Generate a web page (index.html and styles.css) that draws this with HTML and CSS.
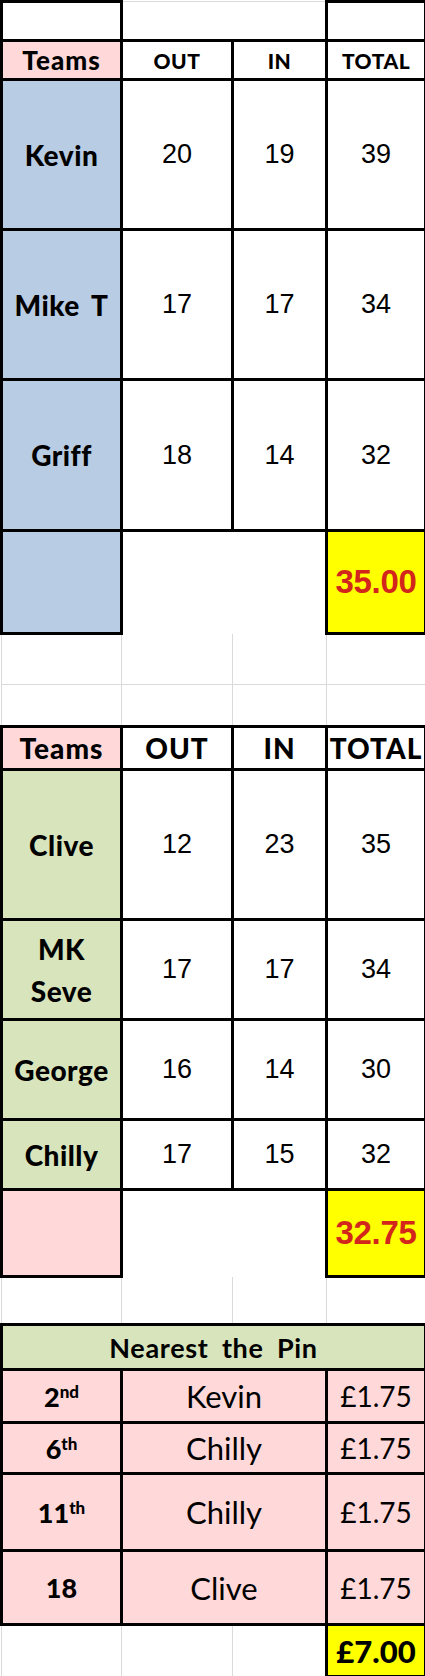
FILE: index.html
```html
<!DOCTYPE html>
<html lang="en">
<head>
<meta charset="utf-8">
<title>Team scores</title>
<link rel="stylesheet" href="styles.css">
</head>
<body>
<table class="sheet">
  <colgroup>
    <col class="c1"><col class="c2"><col class="c3"><col class="c4">
  </colgroup>
  <tbody>
    <tr class="r-top">
      <td class="b"></td><td class="g" colspan="2"></td><td class="b"></td>
    </tr>
    <tr class="r-head1">
      <td class="b pink hd">Teams</td>
      <td class="b hd-sm">OUT</td>
      <td class="b hd-sm">IN</td>
      <td class="b hd-sm">TOTAL</td>
    </tr>
    <tr class="r-150">
      <td class="b blue name">Kevin</td><td class="b num">20</td><td class="b num">19</td><td class="b num">39</td>
    </tr>
    <tr class="r-150">
      <td class="b blue name">Mike T</td><td class="b num">17</td><td class="b num">17</td><td class="b num">34</td>
    </tr>
    <tr class="r-151">
      <td class="b blue name">Griff</td><td class="b num">18</td><td class="b num">14</td><td class="b num">32</td>
    </tr>
    <tr class="r-total1">
      <td class="b blue"></td><td class="open" colspan="2"></td><td class="b yellow avg">35.00</td>
    </tr>
    <tr class="r-gap51">
      <td class="g"></td><td class="g"></td><td class="g"></td><td class="g"></td>
    </tr>
    <tr class="r-gap42">
      <td class="g"></td><td class="g"></td><td class="g"></td><td class="g"></td>
    </tr>
    <tr class="r-head2">
      <td class="b pink hd">Teams</td>
      <td class="b hd">OUT</td>
      <td class="b hd">IN</td>
      <td class="b hd">TOTAL</td>
    </tr>
    <tr class="r-150">
      <td class="b green name">Clive</td><td class="b num">12</td><td class="b num">23</td><td class="b num">35</td>
    </tr>
    <tr class="r-100">
      <td class="b green name two">MK<br>Seve</td><td class="b num">17</td><td class="b num">17</td><td class="b num">34</td>
    </tr>
    <tr class="r-100">
      <td class="b green name">George</td><td class="b num">16</td><td class="b num">14</td><td class="b num">30</td>
    </tr>
    <tr class="r-70">
      <td class="b green name">Chilly</td><td class="b num">17</td><td class="b num">15</td><td class="b num">32</td>
    </tr>
    <tr class="r-total2">
      <td class="b pink"></td><td class="open" colspan="2"></td><td class="b yellow avg">32.75</td>
    </tr>
    <tr class="r-gap48">
      <td class="g"></td><td class="g"></td><td class="g"></td><td class="g"></td>
    </tr>
    <tr class="r-ntp">
      <td class="b green ntp" colspan="4">Nearest the Pin</td>
    </tr>
    <tr class="r-53">
      <td class="b pink hole">2<sup>nd</sup></td><td class="b pink who" colspan="2">Kevin</td><td class="b pink prize">£1.75</td>
    </tr>
    <tr class="r-51">
      <td class="b pink hole">6<sup>th</sup></td><td class="b pink who" colspan="2">Chilly</td><td class="b pink prize">£1.75</td>
    </tr>
    <tr class="r-77">
      <td class="b pink hole">11<sup>th</sup></td><td class="b pink who" colspan="2">Chilly</td><td class="b pink prize">£1.75</td>
    </tr>
    <tr class="r-74">
      <td class="b pink hole">18</td><td class="b pink who" colspan="2">Clive</td><td class="b pink prize">£1.75</td>
    </tr>
    <tr class="r-last">
      <td class="g"></td><td class="g"></td><td class="g"></td><td class="b yellow pot">£7.00</td>
    </tr>
  </tbody>
</table>
</body>
</html>
```

FILE: styles.css
```css
html, body {
  margin: 0;
  padding: 0;
  background: #ffffff;
}

.sheet {
  border-collapse: collapse;
  table-layout: fixed;
  width: 424px;
  color: #000;
  font-family: Lato, "DejaVu Sans", sans-serif;
}

.c1 { width: 120px; }
.c2 { width: 111px; }
.c3 { width: 94px; }
.c4 { width: 99px; }

.sheet td {
  padding: 0;
  text-align: center;
  vertical-align: middle;
  white-space: nowrap;
  overflow: visible;
}

.b { border: 3px solid #000; }
.g { border: 1px solid #dadada; }
.open {
  border: 1px solid #dadada;
  border-bottom-style: hidden;
}

.pink { background: #ffd9d9; }
.blue { background: #b8cce4; }
.green { background: #d8e4bc; }
.yellow { background: #ffff00; }

.r-top { height: 39px; }
.r-head1 { height: 39px; }
.r-150 { height: 150px; }
.r-151 { height: 151px; }
.r-total1 { height: 103px; }
.r-gap51 { height: 51px; }
.r-gap42 { height: 42px; }
.r-head2 { height: 43px; }
.r-100 { height: 100px; }
.r-70 { height: 70px; }
.r-total2 { height: 87px; }
.r-gap48 { height: 48px; }
.r-ntp { height: 45px; }
.r-53 { height: 53px; }
.r-51 { height: 51px; }
.r-77 { height: 77px; }
.r-74 { height: 74px; }
.r-last { height: 52px; }

.hd {
  font-weight: 900;
  font-size: 28px;
  letter-spacing: 1px;
}
.hd-sm {
  font-weight: 900;
  font-size: 21px;
  letter-spacing: 0.5px;
}
.r-head1 .hd { font-size: 26px; }

.name {
  font-weight: 900;
  font-size: 28px;
  letter-spacing: 0.5px;
  word-spacing: 5px;
}
.name.two { line-height: 42px; }

.num {
  font-family: "Liberation Sans", Arial, sans-serif;
  font-size: 27px;
}

.avg {
  font-family: "Liberation Sans", Arial, sans-serif;
  font-weight: 700;
  font-size: 33px;
  color: #d2261c;
  letter-spacing: -0.3px;
}

.ntp {
  font-weight: 700;
  font-size: 27px;
  letter-spacing: 0.7px;
  word-spacing: 6px;
}

.hole {
  font-weight: 900;
  font-size: 27px;
}
.hole sup {
  font-size: 17px;
  line-height: 0;
  vertical-align: 9px;
}

.who {
  font-size: 31px;
}

.prize {
  font-size: 28px;
}

.pot {
  font-weight: 900;
  font-size: 31px;
}
```
